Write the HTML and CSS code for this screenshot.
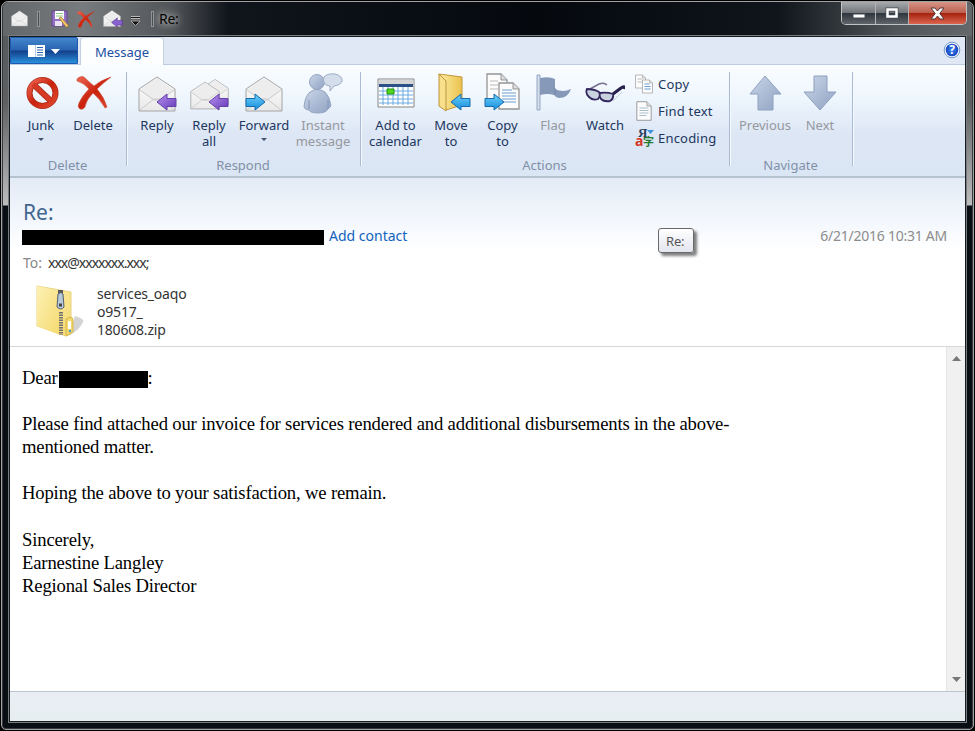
FILE: index.html
```html
<!DOCTYPE html>
<html lang="en">
<head>
    <meta charset="UTF-8">
    <title>Re:</title>
    <link rel="stylesheet" href="styles.css">
</head>
<body>
    <svg class="defs" width="0" height="0">
        <defs>
            <linearGradient id="blue" x2="0" y2="1"><stop stop-color="#6fd0fa"/><stop offset="1" stop-color="#158ddd"/></linearGradient>
            <linearGradient id="purple" x2="1" y2="1"><stop stop-color="#b994f0"/><stop offset="1" stop-color="#6437b8"/></linearGradient>
            <linearGradient id="red" x2="1" y2="1"><stop stop-color="#ee6853"/><stop offset=".5" stop-color="#cb220c"/><stop offset="1" stop-color="#e04c32"/></linearGradient>
            <linearGradient id="steel" x2="1" y2="1"><stop stop-color="#cbd6e7"/><stop offset="1" stop-color="#8fa2c3"/></linearGradient>
            <linearGradient id="paper" x2="0" y2="1"><stop stop-color="#fff"/><stop offset="1" stop-color="#e9e9e9"/></linearGradient>
            <linearGradient id="gold" x2="1"><stop stop-color="#fceda3"/><stop offset="1" stop-color="#e9c24d"/></linearGradient>
            <linearGradient id="zip" x2="1" y2="1"><stop stop-color="#fdf1b4"/><stop offset="1" stop-color="#f5da70"/></linearGradient>
            <radialGradient id="help"><stop stop-color="#3d86f6"/><stop offset="1" stop-color="#1545bd"/></radialGradient>
            <symbol id="envelope" viewBox="0 0 38 36">
                <path d="M1 13 19 1l18 12v22H1z" fill="url(#paper)" stroke="#a2a2a2" stroke-linejoin="round"/>
                <path d="M2 14 19 2l17 12-13 10h-8z" fill="#ededed"/>
                <path d="m2 14 14 10h6l14-10M2 34l14-11h6l14 11" fill="none" stroke="#c9c9c9"/>
            </symbol>
            <symbol id="arrow-left" viewBox="0 0 21 18"><path d="M1 9 11 1v4.500h9v8h-9V17z" stroke-linejoin="round"/></symbol>
            <symbol id="arrow-right" viewBox="0 0 21 18"><path d="M20 9 10 1v4.500H1v8h9V17z" stroke-linejoin="round"/></symbol>
            <symbol id="cross" viewBox="0 0 36 34"><path d="M1 3C4 0 7 0 9 2q4 4 9 8Q25 4 35 1q-8 6-14 12 7 8 10 18l-2 1q-5-9-12-15Q10 24 9 31q-2 3-5 2-3-2-1-6 3-7 10-14Q8 7 1 5z" fill="url(#red)" stroke="#c84b38" stroke-width=".6"/></symbol>
            <symbol id="page" viewBox="0 0 22 28">
                <path d="M1 1h14l6 6v20H1z" fill="#fcfcfc" stroke="#949494" stroke-width="1.300"/>
                <path d="M15 1v6h6" fill="#ddd" stroke="#949494"/>
            </symbol>
        </defs>
    </svg>

    <div class="window">
        <header class="titlebar">
            <svg class="quick-mail" width="18" height="18"><use href="#envelope" width="17" height="17"/></svg>
            <span class="divider"></span>
            <svg class="quick-save" width="18" height="18" viewBox="0 0 18 18">
                <path d="M1 1h15v15H1z" fill="#9470c5" stroke="#65468f"/>
                <path d="M4 1h9v8H4z" fill="#fff"/><path d="M5 3.500h7M5 6h7" stroke="#8cc77d"/>
                <path d="M4 11h7v5H4z" fill="#e9e2f3"/>
                <path d="m8 8 2-1 7 8v2h-2z" fill="#f1c967" stroke="#a0712b" stroke-width=".7"/>
            </svg>
            <svg class="quick-delete" width="18" height="17"><use href="#cross" width="18" height="17"/></svg>
            <svg class="quick-reply" width="20" height="18">
                <use href="#envelope" width="18" height="17"/>
                <use href="#arrow-left" x="8" y="7" width="12" height="11" fill="#8860cf" stroke="#55338f"/>
            </svg>
            <svg class="quick-more" width="9" height="10" viewBox="0 0 9 10"><path d="M0 1.500h9" stroke="#bbb" stroke-width="3"/><path d="M0 1.500h9" stroke="#111"/><path d="M0 5h9L4.500 9.500z" fill="#111" stroke="#bbb" stroke-width=".8"/></svg>
            <span class="divider"></span>
            <span class="window-title">Re:</span>
            <div class="window-buttons">
                <button class="minimize"><svg width="14" height="6"><rect x="1" y="1" width="12" height="4" fill="#fff" stroke="#464b54"/></svg></button>
                <button class="maximize"><svg width="14" height="12"><path d="M2.500 2.500h9v7h-9z" fill="none" stroke="#464b54" stroke-width="4"/><path d="M2.500 2.500h9v7h-9z" fill="none" stroke="#fff" stroke-width="2.500"/></svg></button>
                <button class="close"><svg width="15" height="13" viewBox="0 0 15 13"><path d="M1 1h4l2.500 3L10 1h4L9.800 6.500 14 12h-4L7.500 9 5 12H1l4.200-5.500z" fill="#fff" stroke="#53383b"/></svg></button>
            </div>
        </header>

        <main class="client">
            <nav class="tabs">
                <button class="file-menu">
                    <svg width="34" height="14" viewBox="0 0 34 14">
                        <path d="M0 1h17v12H0z" fill="#fff"/><path d="M7.500 1v12" stroke="#b6c8e2"/>
                        <path d="M9 3.500h6M9 6h6M9 8.500h6M9 11h6" stroke="#2a62b0"/>
                        <path d="M23 5h9l-4.500 5z" fill="#fff"/>
                    </svg>
                </button>
                <span class="tab">Message</span>
                <svg class="help" width="18" height="18" viewBox="0 0 18 18">
                    <circle cx="9" cy="9" r="7.800" fill="#fff" stroke="#7197d2"/><circle cx="9" cy="9" r="6.300" fill="url(#help)"/>
                    <text x="9" y="13.200" text-anchor="middle">?</text>
                </svg>
            </nav>

            <section class="ribbon">
                <div class="group delete-group">
                    <div class="tools">
                        <button class="tool">
                            <svg width="40" height="42" viewBox="0 0 40 42">
                                <circle cx="21.500" cy="20" r="13" fill="none" stroke="#ad2a19" stroke-width="6"/>
                                <path d="m12 11 19 18" stroke="#ad2a19" stroke-width="6"/>
                                <circle cx="21.500" cy="20" r="13" fill="none" stroke="url(#red)" stroke-width="4.500"/>
                                <path d="m12 11 19 18" stroke="#d63a25" stroke-width="4.500"/>
                            </svg>
                            <span>Junk</span><i class="caret"></i>
                        </button>
                        <button class="tool">
                            <svg width="40" height="42"><use href="#cross" x="3" y="3" width="36" height="34"/></svg>
                            <span>Delete</span>
                        </button>
                    </div>
                    <div class="group-name">Delete</div>
                </div>

                <div class="group respond-group">
                    <div class="tools">
                        <button class="tool reply">
                            <svg width="40" height="42"><use href="#envelope" x="1" y="3" width="38" height="36"/><use href="#arrow-left" x="19" y="20" width="21" height="18" fill="url(#purple)" stroke="#6541aa"/></svg>
                            <span>Reply</span>
                        </button>
                        <button class="tool reply-all">
                            <svg width="40" height="42"><use href="#envelope" x="12" y="5" width="28" height="28"/><use href="#envelope" x="1" y="8" width="30" height="29"/><use href="#arrow-left" x="19" y="20" width="21" height="18" fill="url(#purple)" stroke="#6541aa"/></svg>
                            <span>Reply<br>all</span>
                        </button>
                        <button class="tool forward">
                            <svg width="40" height="42"><use href="#envelope" x="1" y="3" width="38" height="36"/><use href="#arrow-right" x="1" y="20" width="21" height="18" fill="url(#blue)" stroke="#176cad"/></svg>
                            <span>Forward</span><i class="caret"></i>
                        </button>
                        <button class="tool instant disabled">
                            <svg width="40" height="42" viewBox="0 0 40 42">
                                <path d="M7 19q7-5 15 0 5 5 6 14l-3 3q-2 4-10 4T6 37q-4 0-5-3Q2 23 7 19z" fill="url(#steel)" stroke="#93a5c1"/>
                                <path d="M6 36V27m19 9v-9" stroke="#8094b4"/>
                                <circle cx="14" cy="9" r="7.500" fill="url(#steel)" stroke="#93a5c1"/>
                                <path d="M21 4q4-4 11-3 8 2 7 7-1 4-8 5l-4 5v-5q-5 0-6-4-1-2 0-5z" fill="#d4deeb" stroke="#9daec7"/>
                            </svg>
                            <span>Instant<br>message</span>
                        </button>
                    </div>
                    <div class="group-name">Respond</div>
                </div>

                <div class="group actions-group">
                    <div class="tools">
                        <button class="tool calendar">
                            <svg width="40" height="42" viewBox="0 0 40 42">
                                <path d="M2 6h36v28H2z" fill="#fff" stroke="#858585"/><path d="M3 7h34v4H3z" fill="#d5d5d5"/><path d="M3 11h34v3H3z" fill="#2c5188"/>
                                <path d="M3 18h34M3 22h34M3 26h34M3 30h34M7 14v18M12 14v18M17 14v18M22 14v18M27 14v18M32 14v18" stroke="#6ba9e2"/>
                                <path d="M11 16h7v5h-7z" fill="#50d71c" stroke="#249316"/>
                            </svg>
                            <span>Add to<br>calendar</span>
                        </button>
                        <button class="tool move">
                            <svg width="40" height="42" viewBox="0 0 40 42">
                                <path d="m8 1 23 3v28l-16 5z" fill="url(#gold)" stroke="#c2983c"/>
                                <path d="m8 1 7 7v30L8 33z" fill="#f7df8b" stroke="#bd943b"/>
                                <use href="#arrow-left" x="19" y="20" width="21" height="18" fill="url(#blue)" stroke="#176cad"/>
                            </svg>
                            <span>Move<br>to</span>
                        </button>
                        <button class="tool copy-to">
                            <svg width="40" height="42" viewBox="0 0 40 42">
                                <use href="#page" x="3" y="0" width="22" height="28"/><path d="M7 8h8M7 12h8M7 16h8" stroke="#bbb"/>
                                <use href="#page" x="15" y="9" width="22" height="28"/><path d="M19 17h10M19 20h14M19 23h14M19 26h14M19 29h14" stroke="#679ed4"/>
                                <use href="#arrow-right" x="1" y="20" width="21" height="18" fill="url(#blue)" stroke="#176cad"/>
                            </svg>
                            <span>Copy<br>to</span>
                        </button>
                        <button class="tool flag disabled">
                            <svg width="40" height="42" viewBox="0 0 40 42">
                                <path d="M4 2h3v35H4z" fill="#d5deeb" stroke="#94a7c3"/>
                                <path d="M7 5q9-2 15 1v10q8 4 16 0-3 9-12 9-3 0-5-3-6-2-14 0z" fill="#8799b8"/>
                                <path d="M22 15v6" stroke="#6e83a6"/>
                            </svg>
                            <span>Flag</span>
                        </button>
                        <button class="tool watch">
                            <svg width="40" height="42" viewBox="0 0 40 42">
                                <path d="M5 16 14 11q5-2 8 1" fill="none" stroke="#77718e" stroke-width="1.500"/>
                                <path d="m28 21 8-6q4-3 3 1" fill="none" stroke="#28204c" stroke-width="3"/>
                                <path d="M2 16q7 0 12 3 2 4-1 7-5 2-9-2-4-4-2-8zM15 20q7-1 13 1 1 5-3 7-6 1-9-2-2-3-1-6z" fill="#c9d3df" stroke="#33275e" stroke-width="1.800"/>
                                <path d="m28 28 9-9" stroke="#c4cddc"/>
                            </svg>
                            <span>Watch</span>
                        </button>
                        <ul class="tool-list">
                            <li>
                                <svg width="19" height="20" viewBox="0 0 19 20"><use href="#page" x="0" y="0" width="11" height="15"/><path d="M2.500 5h5M2.500 8h5" stroke="#bbb"/><use href="#page" x="7" y="5" width="11" height="15"/><path d="M9.500 10h5M9.500 12.500h6M9.500 15h6" stroke="#679ed4"/></svg>
                                Copy
                            </li>
                            <li>
                                <svg width="19" height="20" viewBox="0 0 19 20"><use href="#page" x="1" y="0" width="16" height="20"/><path d="M4.500 7h9M4.500 9.500h9M4.500 12h9M4.500 14.500h7" stroke="#a9bfce"/></svg>
                                Find text
                            </li>
                            <li>
                                <svg class="encoding" width="19" height="20" viewBox="0 0 19 20">
                                    <text class="ya" x="3" y="9">Я</text><text class="latin" x="0" y="18">a</text><text class="han" x="8" y="18">字</text>
                                    <path d="M12 2h7l-3.500 4z" fill="#3e91da"/>
                                </svg>
                                Encoding
                            </li>
                        </ul>
                    </div>
                    <div class="group-name">Actions</div>
                </div>

                <div class="group navigate-group">
                    <div class="tools">
                        <button class="tool previous disabled">
                            <svg width="40" height="42" viewBox="0 0 40 42"><path d="m20 3 16 18h-8v16H13V21H5z" fill="url(#steel)" stroke="#8da0bf" stroke-linejoin="round"/></svg>
                            <span>Previous</span>
                        </button>
                        <button class="tool next disabled">
                            <svg width="40" height="42" viewBox="0 0 40 42"><path d="M14 3h13v16h9L20 37 4 19h10z" fill="url(#steel)" stroke="#8da0bf" stroke-linejoin="round"/></svg>
                            <span>Next</span>
                        </button>
                    </div>
                    <div class="group-name">Navigate</div>
                </div>
            </section>

            <section class="mail-header">
                <h1>Re:</h1>
                <div class="sender">
                    <span class="redacted"></span>
                    <a href="#">Add contact</a>
                    <time>6/21/2016 10:31 AM</time>
                </div>
                <div class="recipient"><span>To:</span> <b>xxx@xxxxxxx.xxx;</b></div>
                <div class="attachment">
                    <svg width="54" height="54" viewBox="0 0 54 54">
                        <path d="m34 50 6-19q10 3 8 6-4 9-14 13z" fill="#aaa" opacity=".5"/>
                        <path d="m2 1 34 6v42l-5 2L2 41z" fill="url(#zip)" stroke="#e7d27e"/>
                        <path d="m2 1 23 5v44L2 41z" fill="url(#zip)"/>
                        <path d="M26 27v23" stroke="#707070" stroke-width="4" stroke-dasharray="1.500 1"/>
                        <path d="M23 5h5v5h-5z" fill="#555"/>
                        <path d="M23 9q3-3 5 0l1 13q-3 4-7 0z" fill="#b8c9da" stroke="#53606c"/><path d="M24 20h3" stroke="#444" stroke-width="3"/>
                        <path d="m31 34 4-2q3 0 3 3v12l-7 4z" fill="#f3d76d" stroke="#d7b84d"/><path d="M33 36h3v8h-3z" fill="#fff"/><circle cx="35" cy="46" r="1.200" fill="#479dcc"/>
                    </svg>
                    <span>services_oaqo<br>o9517_<br>180608.zip</span>
                </div>
                <div class="tooltip">Re:</div>
            </section>

            <section class="message">
                <div class="message-text">
                    <p class="greeting">Dear<span class="redacted-name"></span>:</p>
                    <p>Please find attached our invoice for services rendered and additional disbursements in the above-<br>mentioned matter.</p>
                    <p>Hoping the above to your satisfaction, we remain.</p>
                    <p>Sincerely,<br>Earnestine Langley<br>Regional Sales Director</p>
                </div>
                <div class="scrollbar">
                    <svg width="9" height="5"><path d="M0 5 4.500 0 9 5z" fill="#777"/></svg>
                    <svg width="9" height="5"><path d="M0 0h9L4.500 5z" fill="#777"/></svg>
                </div>
            </section>
            <footer class="statusbar"></footer>
        </main>
    </div>
</body>
</html>
```
FILE: styles.css
```css
* {
    box-sizing: border-box;
}
body {
    margin: 0;
    background: #000;
    font: 13px/16px "Noto Sans", "Open Sans", sans-serif;
    color: #20365f;
}
button {
    font: inherit;
    color: inherit;
    padding: 0;
    border: 0;
    background: none;
}
.defs {
    position: absolute;
}
svg {
    display: block;
    flex-shrink: 0;
}
.window {
    width: 973px;
    height: 729px;
    margin: 1px;
    padding: 0 7px;
    border: 1px solid #a0a2a4;
    border-radius: 7px 7px 5px 5px;
    background: linear-gradient(#54585b 0, #5d5f61 100px, #bdbdbd 203px, #080e14 204px);
    box-shadow: inset 0 0 0 1px #34393e;
}
.titlebar {
    display: flex;
    align-items: center;
    height: 34px;
    margin: 0 -6px;
    padding-left: 8px;
    background: linear-gradient(90deg, #64676a 0, #787b7d 80px, #505357 170px, #10151b 225px, #05090e 55%, #10151b 80%, #505559 92%, #64686b 100%);
    border-radius: 6px 6px 0 0;
}
.titlebar .divider {
    width: 3px;
    height: 16px;
    margin: 0 11px 0 8px;
    border: 1px solid #929597;
    background: #4a4e52;
}
.quick-delete {
    margin-left: 8px;
}
.quick-reply {
    margin-left: 8px;
}
.quick-more {
    margin: 4px 0 0 8px;
}
.titlebar .quick-more + .divider {
    margin: 0 5px 0 11px;
}
.window-title {
    color: #050505;
    font-size: 14px;
    letter-spacing: -.3px;
    text-shadow: 0 0 6px #bbb, 0 0 9px #999, 0 0 12px #999;
}
.window-buttons {
    display: flex;
    align-self: flex-start;
    height: 23px;
    margin: 0 5px 0 auto;
    border: 1px solid #c0c2c4;
    border-top: 0;
    border-radius: 0 0 5px 5px;
    overflow: hidden;
}
.window-buttons button {
    display: grid;
    place-items: center;
    width: 34px;
    border: solid #b1b3b5;
    border-width: 0 1px 0 0;
    background: linear-gradient(#a8aaad, #73777b 48%, #30363d 52%, #5f646a);
}
.window-buttons .minimize {
    padding-top: 5px;
}
.window-buttons .maximize {
    width: 33px;
}
.window-buttons .close {
    width: 57px;
    border: 0;
    background: linear-gradient(#d69487, #bd6250 48%, #a52310 52%, #dc654e);
}
.client {
    height: 686px;
    border: 1px solid #171c21;
    outline: 1px solid #777c80;
    background: #fff;
}
.tabs {
    display: flex;
    height: 28px;
    background: #dfe8f4;
    border-bottom: 1px solid #bccbdd;
}
.file-menu {
    width: 68px;
    height: 27px;
    padding-left: 17px;
    border: 1px solid #1e5aaf;
    border-radius: 0 2px 0 0;
    background: linear-gradient(#4387cd, #2863b1 48%, #133f89 52%, #2a91dd);
}
.tab {
    height: 28px;
    margin-left: 2px;
    width: 84px;
    padding-top: 6px;
    border: 1px solid #c3cfdf;
    border-bottom: 0;
    border-radius: 4px 4px 0 0;
    background: #fdfeff;
    text-align: center;
    color: #2150a1;
}
.help {
    margin: 4px 4px 0 auto;
}
.help text {
    font-size: 12px;
    font-weight: bold;
    fill: #fff;
}
.ribbon {
    display: flex;
    height: 113px;
    background: linear-gradient(#fafdff, #edf5fd 35px, #dce6f4 70px, #dbe6f4);
    border-bottom: 2px solid #b5c2d2;
}
.group {
    position: relative;
    height: 104px;
    padding: 8px 0 0 5px;
}
.group::after {
    content: "";
    position: absolute;
    top: 7px;
    right: -1px;
    width: 2px;
    height: 94px;
    background: linear-gradient(90deg, #a9bbd5 50%, #f5f9fd 50%);
}
.tools {
    display: flex;
    height: 84px;
}
.tool {
    display: flex;
    flex-direction: column;
    align-items: center;
    width: 52px;
    white-space: nowrap;
}
.tool span {
    margin-top: 2px;
}
.disabled {
    color: #96989f;
}
.caret {
    margin-top: 5px;
    border: 3px solid transparent;
    border-top-color: #425473;
    border-bottom: 0;
}
.group-name {
    margin-right: 7px;
    text-align: center;
    color: #8190a9;
}
.delete-group {
    width: 117px;
}
.respond-group {
    width: 234px;
}
.actions-group {
    width: 369px;
}
.navigate-group {
    width: 123px;
}
.reply {
    width: 50px;
}
.reply-all {
    width: 54px;
}
.forward {
    width: 56px;
}
.instant {
    width: 62px;
}
.calendar {
    width: 59px;
}
.copy-to {
    width: 51px;
}
.flag {
    width: 50px;
}
.watch {
    width: 54px;
}
.previous {
    width: 60px;
}
.next {
    width: 50px;
}
.tool-list {
    margin: -3px 0 0 3px;
    padding: 0;
    list-style: none;
    white-space: nowrap;
    letter-spacing: .2px;
}
.tool-list li {
    display: flex;
    align-items: center;
    gap: 4px;
    height: 27px;
}
.encoding {
    overflow: visible;
    letter-spacing: 0;
}
.encoding text {
    font-weight: bold;
}
.encoding .ya {
    font-family: "Liberation Serif", serif;
    font-size: 13px;
    fill: #293f61;
}
.encoding .latin {
    font-size: 14px;
    fill: #d43725;
}
.encoding .han {
    font-family: "Noto Sans CJK SC", sans-serif;
    font-size: 11px;
    fill: #267a31;
}
.mail-header {
    position: relative;
    height: 169px;
    padding: 21px 18px 0 12px;
    background: linear-gradient(#e3ebf6, #f0f5fb 35px, #fff 72px);
    border-bottom: 1px solid #d7d7d7;
    font-size: 14px;
}
.mail-header h1 {
    margin: 0 1px;
    font-size: 21px;
    line-height: 27px;
    font-weight: 400;
    color: #41658f;
}
.sender {
    display: flex;
    height: 20px;
    align-items: center;
}
.redacted {
    width: 302px;
    height: 15px;
    margin: 3px 5px 0 0;
    background: #000;
}
.sender a {
    color: #1263bd;
    text-decoration: none;
}
.sender time {
    margin-left: auto;
    color: #8c8c8c;
    letter-spacing: -.25px;
}
.recipient {
    display: flex;
    gap: 6px;
    margin: 9px 0 0 1px;
    color: #888;
}
.recipient b {
    font-weight: normal;
    color: #353535;
    letter-spacing: -1px;
}
.attachment {
    display: flex;
    gap: 8px;
    margin: 14px 0 0 13px;
    line-height: 18px;
    letter-spacing: -.2px;
    color: #333;
}
.tooltip {
    position: absolute;
    left: 648px;
    top: 50px;
    width: 36px;
    height: 25px;
    padding: 4px 7px;
    border: 1px solid #696969;
    border-radius: 3px;
    background: linear-gradient(#fff, #e3e5f0);
    box-shadow: 3px 3px 3px rgba(0, 0, 0, .5);
    font-size: 13px;
    letter-spacing: -.2px;
    color: #565656;
}
.message {
    display: flex;
    justify-content: space-between;
    height: 344px;
}
.message-text {
    padding: 19px 0 0 12px;
    font: 18.67px/23.1px "Liberation Serif", serif;
    letter-spacing: -.17px;
    color: #000;
    white-space: nowrap;
}
.message-text p {
    margin: 0 0 23.1px;
}
.redacted-name {
    display: inline-block;
    width: 89px;
    height: 17px;
    margin: 0 0 0 1px;
    background: #000;
    vertical-align: -4px;
}
.message-text .greeting {
    height: 23px;
}
.scrollbar {
    display: flex;
    flex-direction: column;
    justify-content: space-between;
    align-items: center;
    width: 19px;
    padding: 9px 0;
    background: #f0f0f0;
    border-left: 1px solid #e5e5e5;
}
.statusbar {
    height: 30px;
    background: linear-gradient(#e9eef5, #e6eeef);
    border-top: 1px solid #bdc5cf;
}
```
